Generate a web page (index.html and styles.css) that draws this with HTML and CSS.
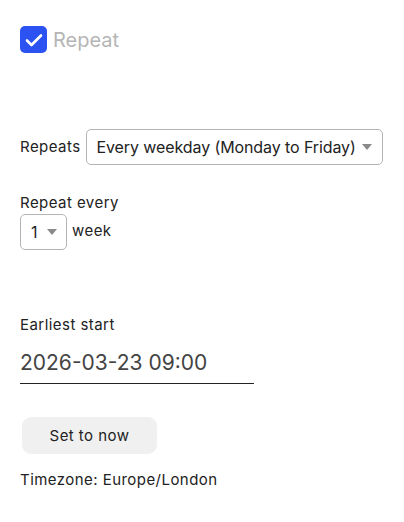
FILE: index.html
```html
<!DOCTYPE html>
<html lang="en">
<head>
  <meta charset="UTF-8" />
  <title>Repeat</title>
  <link rel="stylesheet" href="styles.css">
</head>
<body>

  <!-- Repeat toggle -->
  <label class="repeat-toggle">
    <span class="check">
      <svg width="18" height="14" viewBox="0 0 18 14"><path d="M2 7.5 L6.5 12 L16 2.5" fill="none" stroke="#fff" stroke-width="2.6" stroke-linecap="round" stroke-linejoin="round"/></svg>
    </span>
    <span class="repeat-label">Repeat</span>
  </label>

  <!-- Repeats -->
  <div class="row repeats">
    <span class="label">Repeats</span>
    <div class="select wide">
      <span>Every weekday (Monday to Friday)</span>
      <span class="arrow"></span>
    </div>
  </div>

  <!-- Repeat every -->
  <div class="every">
    <div class="label">Repeat every</div>
    <div class="row">
      <div class="select small">
        <span>1</span>
        <span class="arrow"></span>
      </div>
      <span class="label">week</span>
    </div>
  </div>

  <!-- Earliest start -->
  <div class="start">
    <div class="label">Earliest start</div>
    <div class="date">2026-03-23 09:00</div>
    <button class="now">Set to now</button>
    <div class="label tz">Timezone: Europe/London</div>
  </div>

</body>
</html>
```

FILE: styles.css
```css
* {
  margin: 0;
  padding: 0;
  box-sizing: border-box;
  font-family: Inter, "Liberation Sans", sans-serif;
}

body {
  background: #fff;
  color: #222;
  padding: 26px 20px 0;
}

.repeat-toggle {
  display: flex;
  align-items: center;
  gap: 6px;
}

.check {
  width: 27px;
  height: 27px;
  border-radius: 5px;
  background-color: #2c53f2;
  display: flex;
  align-items: center;
  justify-content: center;
}

.repeat-label {
  font-size: 20px;
  color: #b5b5b5;
}

.label {
  font-size: 15px;
  line-height: 18px;
  letter-spacing: 0.45px;
  color: #222;
}

.row {
  display: flex;
  align-items: center;
  gap: 5px;
}

.repeats {
  margin-top: 76px;
  gap: 5px;
}

.select {
  display: flex;
  flex-shrink: 0;
  align-items: center;
  justify-content: space-between;
  height: 36px;
  border: 1px solid #b4b4b4;
  border-radius: 5px;
  font-size: 16px;
  letter-spacing: -0.1px;
  color: #222;
  background: #fff;
}

.select.wide {
  width: 297px;
  padding: 0 10px 0 10px;
}

.select.small {
  width: 47px;
  padding: 0 9px 0 10px;
}

.arrow {
  width: 0;
  height: 0;
  border-left: 5px solid transparent;
  border-right: 5px solid transparent;
  border-top: 6px solid #8a8a8a;
}

.every {
  margin-top: 29px;
}

.every .label {
  margin-bottom: 2px;
}

.start {
  margin-top: 66px;
}

.date {
  font-size: 21px;
  color: #444;
  width: 234px;
  padding: 16px 0 8px;
  border-bottom: 1px solid #222;
}

.now {
  display: block;
  margin: 33px 0 0 2px;
  width: 135px;
  height: 37px;
  border: none;
  border-radius: 9px;
  background-color: #f0f0f0;
  font-size: 15px;
  letter-spacing: 0.45px;
  color: #222;
}

.tz {
  margin-top: 17px;
}
```
